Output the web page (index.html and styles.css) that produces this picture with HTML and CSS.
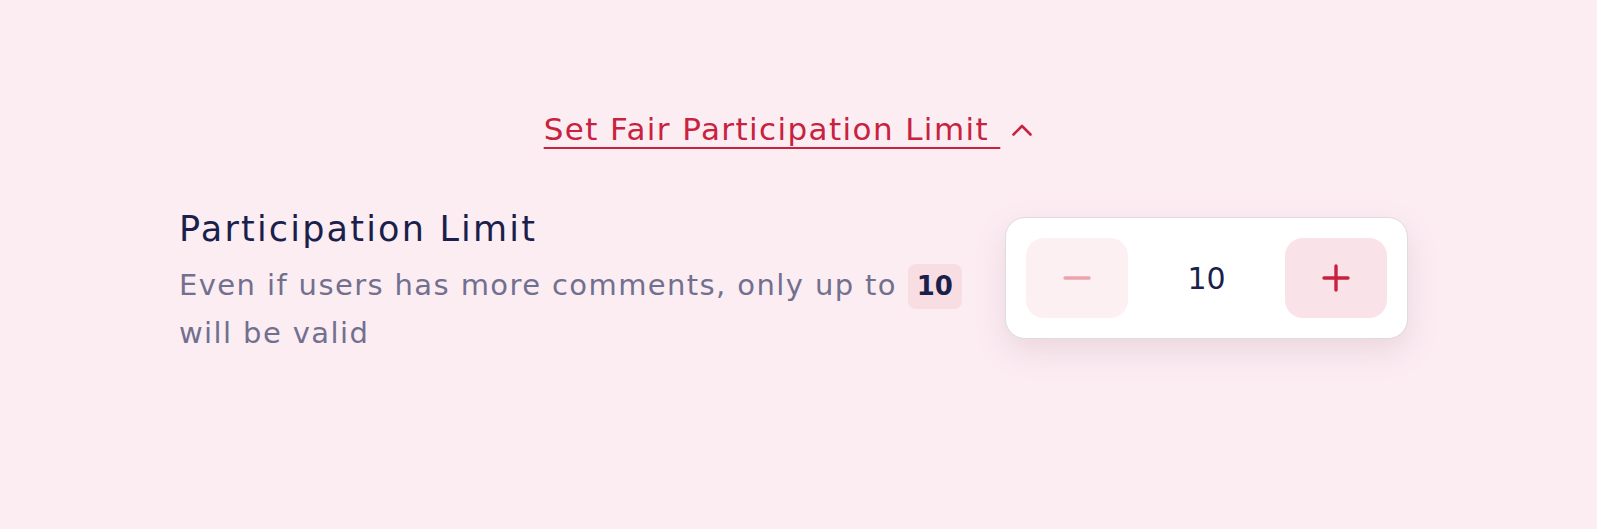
FILE: index.html
```html
<html>
	<head>
		<title>Participation Limit</title>
		<meta charset="UTF-8">
		<meta name="viewport" content="width=device-width, initial-scale=1">
		<link rel="stylesheet" href="styles.css">
	</head>
	<body>
		<div id="page">
			<div class="toggle">
				<a href="#" class="toggle-link">Set Fair Participation Limit </a>
				<svg class="caret" width="22" height="12" viewBox="0 0 22 12" fill="none">
					<path d="M2.5 10.5 L11 2 L19.5 10.5" stroke="#c8223f" stroke-width="2.6" stroke-linecap="round" stroke-linejoin="round"/>
				</svg>
			</div>
			<div class="limit-row">
				<div class="limit-text">
					<h2>Participation Limit</h2>
					<p>Even if users has more comments, only up to <span class="badge">10</span> will be valid</p>
				</div>
				<div class="stepper">
					<button class="step minus" type="button">
						<svg width="28" height="4" viewBox="0 0 28 4"><path d="M2 2 H26" stroke="#eba4ae" stroke-width="3.4" stroke-linecap="round"/></svg>
					</button>
					<span class="value">10</span>
					<button class="step plus" type="button">
						<svg width="28" height="28" viewBox="0 0 28 28"><path d="M2 14 H26 M14 2 V26" stroke="#c8213f" stroke-width="3.4" stroke-linecap="round"/></svg>
					</button>
				</div>
			</div>
		</div>
	</body>
</html>
```

FILE: styles.css
```css
html, body {
	box-sizing: border-box;
	margin: 0;
	padding: 0;
	font-family: 'DejaVu Sans', 'Inter', sans-serif;
	background-color: #fcedf3;
	height: 100%;
}

#page {
	width: 1229px;
	margin: 0 auto;
	padding: 109px 10px 0 0;
}

.toggle {
	display: flex;
	justify-content: center;
	align-items: center;
	gap: 11px;
	height: 40px;
	padding-right: 10px;
}

.toggle-link {
	color: #c8223f;
	font-size: 31px;
	line-height: 40px;
	letter-spacing: 1.4px;
	text-decoration: underline;
	text-underline-offset: 7px;
	text-decoration-thickness: 2px;
	white-space: pre;
}

.caret {
	margin-top: 2px;
}

.limit-row {
	display: flex;
	align-items: flex-start;
	justify-content: space-between;
	margin-top: 58px;
}

.limit-text {
	width: 800px;
}

.limit-text h2 {
	margin: 0;
	font-size: 35px;
	font-weight: 400;
	letter-spacing: 2.2px;
	color: #1b1f4b;
	line-height: 44px;
}

.limit-text p {
	margin: 10px 0 0;
	font-size: 29px;
	letter-spacing: 1.4px;
	line-height: 48px;
	color: #72708f;
}

.badge {
	display: inline-block;
	background-color: #f8dde3;
	color: #1b1f4b;
	font-size: 26px;
	font-weight: 700;
	letter-spacing: 0;
	padding: 0 9px;
	line-height: 45px;
	border-radius: 8px;
}

.stepper {
	display: flex;
	align-items: center;
	justify-content: space-between;
	width: 361px;
	margin-top: 10px;
	padding: 20px;
	background-color: #fff;
	border: 1px solid #dedbe1;
	border-radius: 20px;
	box-shadow: 0 12px 30px rgba(160, 110, 130, 0.18);
}

.step {
	width: 102px;
	height: 80px;
	border: none;
	border-radius: 18px;
	display: flex;
	align-items: center;
	justify-content: center;
	padding: 0;
}

.minus {
	background-color: #fdf0f2;
}

.plus {
	background-color: #fae3e8;
}

.value {
	font-size: 30px;
	color: #1b1f4b;
}
```
